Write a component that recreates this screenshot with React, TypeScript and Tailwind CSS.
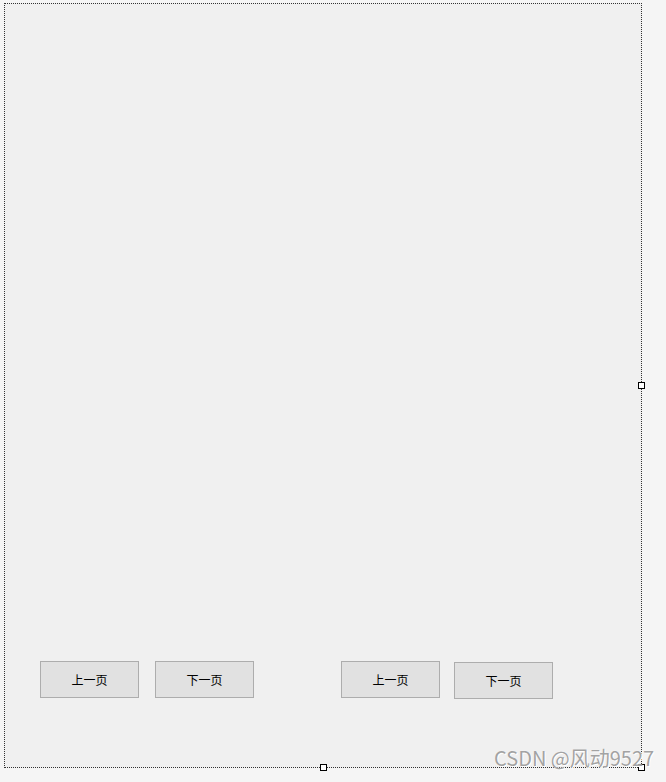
import React from 'react';

const cjk = { fontFamily: '"Noto Sans CJK SC", "Noto Sans", sans-serif' };

const PageButton: React.FC<{ label: string; className?: string }> = ({ label, className = '' }) => (
  <button
    className={`w-[99px] h-[37px] bg-[#e1e1e1] border border-[#adadad] text-[12px] text-black leading-none ${className}`}
    style={cjk}
  >
    {label}
  </button>
);

const Handle: React.FC<{ className: string }> = ({ className }) => (
  <div className={`absolute w-[7px] h-[7px] bg-white border border-black ${className}`} />
);

const App: React.FC = () => {
  return (
    <div className="w-[666px] h-[782px] bg-[#f5f5f5] relative overflow-hidden pt-[3px] pl-[4px]">
      <div className="w-[638px] h-[765px] border border-dotted border-[#333] bg-[#f0f0f0] flex flex-col">
        <div className="flex-1" />
        <div className="flex items-start pl-[35px] pb-[68px]">
          <PageButton label="上一页" />
          <PageButton label="下一页" className="ml-[16px]" />
          <PageButton label="上一页" className="ml-[87px]" />
          <PageButton label="下一页" className="ml-[14px] mt-px" />
        </div>
      </div>

      <Handle className="left-[638px] top-[382px]" />
      <Handle className="left-[320px] top-[764px]" />
      <Handle className="left-[638px] top-[764px]" />

      <div
        className="absolute left-[494px] top-[748px] text-[20px] leading-none text-[#a3a3a3] whitespace-nowrap [text-shadow:0_0_1px_#fff,1px_1px_0_#fff]"
        style={cjk}
      >
        CSDN @风动9527
      </div>
    </div>
  );
};

export default App;
